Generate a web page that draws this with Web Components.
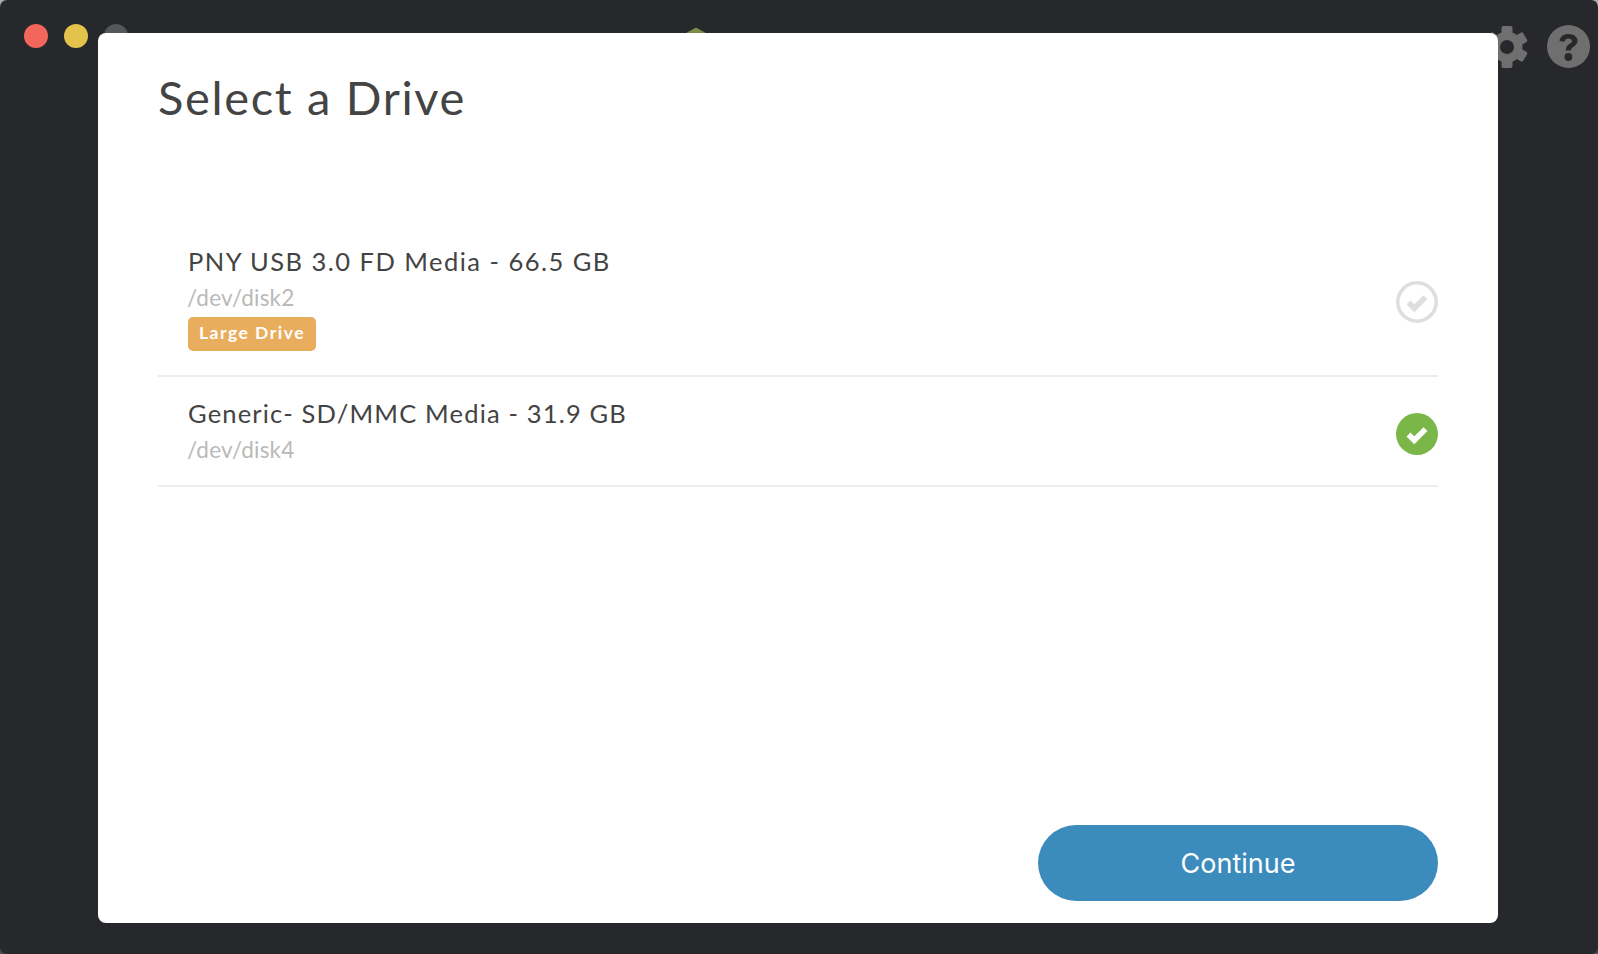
<!DOCTYPE html>
<html>
<head>
<meta charset="utf-8">
<title>Select a Drive</title>
<style>
html, body { margin: 0; height: 100%; overflow: hidden; }
/* the desktop only shows through the window's rounded corners */
html { background: linear-gradient(#a3aab2 0 50%, #4a4b50 50%); }
body { font-family: "Lato", "Liberation Sans", sans-serif; }
</style>
</head>
<body>
<app-window>
  <drive-modal heading="Select a Drive">
    <drive-row style="--name-spacing: 1.47px" name="PNY USB 3.0 FD Media - 66.5 GB" path="/dev/disk2" warning="Large Drive"></drive-row>
    <drive-row style="--name-spacing: 1.17px; --icon-shift: 6px" name="Generic- SD/MMC Media - 31.9 GB" path="/dev/disk4" selected></drive-row>
    <pill-button slot="footer">Continue</pill-button>
  </drive-modal>
</app-window>

<script>
class AppWindow extends HTMLElement {
    constructor() {
        super();
        this.attachShadow({ mode: 'open' });
        this.shadowRoot.innerHTML = `
<style>
:host { display: block; position: relative; width: 1598px; height: 954px; background: #27282c; border-radius: 7px; overflow: hidden; }
header { display: flex; align-items: flex-start; padding: 24px 8px 0 24px; }
.dots { display: flex; gap: 16px; }
.dots i { width: 24px; height: 24px; border-radius: 50%; }
.logo { display: block; margin: 3px 0 0 548px; }
.tools { display: flex; align-items: center; gap: 19px; margin: 1px 0 0 auto; }
.tools svg { display: block; }
::slotted(*) { position: absolute; left: 98px; top: 33px; }
</style>
<header>
  <div class="dots">
    <i style="background:#f2665c"></i>
    <i style="background:#e3c34b"></i>
    <i style="background:#56575a"></i>
  </div>
  <svg class="logo" width="40" height="44" viewBox="0 0 40 44"><path d="M20 1 L38 11 V33 L20 44 L2 33 V11 Z" fill="#7a8c46" stroke="#7a8c46" stroke-width="1" stroke-linejoin="round"/></svg>
  <div class="tools">
    <svg width="42" height="42" viewBox="-21 -21 42 42" fill="#6f6f6f">
      <circle r="15.500"/>
      <rect x="-5.500" y="-21" width="11" height="12" rx="2"/>
      <rect x="-5.500" y="-21" width="11" height="12" rx="2" transform="rotate(60)"/>
      <rect x="-5.500" y="-21" width="11" height="12" rx="2" transform="rotate(120)"/>
      <rect x="-5.500" y="-21" width="11" height="12" rx="2" transform="rotate(180)"/>
      <rect x="-5.500" y="-21" width="11" height="12" rx="2" transform="rotate(240)"/>
      <rect x="-5.500" y="-21" width="11" height="12" rx="2" transform="rotate(300)"/>
      <circle r="7" fill="#27282c"/>
    </svg>
    <svg width="43" height="43" viewBox="0 0 43 43"><circle cx="21.500" cy="21.500" r="21.500" fill="#6f6f6f"/><path d="M12.500 16c.6-4.500 4.300-7 9-7 5.200 0 9 2.800 9 6.800 0 5.700-6.500 5.500-6.500 9.700h-5.200c0-6.700 6.200-6.500 6.200-9.500 0-1.500-1.500-2.500-3.500-2.500-2.100 0-3.500 1-4 3.300z" fill="#27282c"/><circle cx="21.400" cy="32" r="3.900" fill="#27282c"/></svg>
  </div>
</header>
<slot></slot>`;
    }
}
customElements.define('app-window', AppWindow);

class DriveModal extends HTMLElement {
    constructor() {
        super();
        this.attachShadow({ mode: 'open' });
        this.shadowRoot.innerHTML = `
<style>
:host { display: flex; flex-direction: column; box-sizing: border-box; width: 1400px; height: 890px; padding: 0 60px 22px; background: #fff; border-radius: 8px; color: #434343; }
h1 { margin: 0; height: 192px; padding-top: 31px; box-sizing: border-box; font: 400 47px/66px "Lato", "Liberation Sans", sans-serif; letter-spacing: 1.660px; color: #444; }
.list { flex: 1; }
footer { display: flex; justify-content: flex-end; }
</style>
<h1></h1>
<div class="list"><slot></slot></div>
<footer><slot name="footer"></slot></footer>`;
        this.shadowRoot.querySelector('h1').textContent = this.getAttribute('heading');
    }
}
customElements.define('drive-modal', DriveModal);

class DriveRow extends HTMLElement {
    constructor() {
        super();
        this.attachShadow({ mode: 'open' });
        this.shadowRoot.innerHTML = `
<style>
:host { display: flex; align-items: center; justify-content: space-between; padding: 18px 0 18px 30px; border-bottom: 2px solid #ededed; }
.name { font-size: 25.500px; line-height: 36px; margin-bottom: 2px; letter-spacing: var(--name-spacing, 1.3px); color: #434343; }
.path { margin-left: -1px; font-size: 22.500px; line-height: 34px; letter-spacing: .2px; color: #b9b9b9; }
.badge { display: block; width: fit-content; height: 34px; margin: 2px 0 6px; padding: 0 11px; font-size: 17.500px; font-weight: 700; line-height: 32px; letter-spacing: 1.500px; color: #fff; background: #e9ae5d; border-radius: 5px; }
svg { display: block; flex: none; margin-top: var(--icon-shift, 4px); }
</style>
<div>
  <div class="name"></div>
  <div class="path"></div>
  <div class="badge"></div>
</div>
<svg width="42" height="42" viewBox="0 0 42 42"></svg>`;
    }

    connectedCallback() {
        const root = this.shadowRoot;
        root.querySelector('.name').textContent = this.getAttribute('name');
        root.querySelector('.path').textContent = this.getAttribute('path');
        const badge = root.querySelector('.badge');
        if (this.hasAttribute('warning')) badge.textContent = this.getAttribute('warning');
        else badge.remove();

        const check = 'M12.500 21.500l5.800 5.800 11.200-11.200';
        root.querySelector('svg').innerHTML = this.hasAttribute('selected')
            ? `<circle cx="21" cy="21" r="21" fill="#7ab648"/><path d="${check}" fill="none" stroke="#fff" stroke-width="5.500"/>`
            : `<circle cx="21" cy="21" r="19.200" fill="none" stroke="#dedede" stroke-width="3.600"/><path d="${check}" fill="none" stroke="#dedede" stroke-width="5.500"/>`;
    }
}
customElements.define('drive-row', DriveRow);

class PillButton extends HTMLElement {
    constructor() {
        super();
        this.attachShadow({ mode: 'open' });
        this.shadowRoot.innerHTML = `
<style>
:host { display: block; }
button { display: block; width: 400px; height: 76px; padding: 0; border: 0; border-radius: 38px; background: #3c8bbd; color: #fff; font: 400 27px "Inter", "Liberation Sans", sans-serif; cursor: pointer; }
</style>
<button><slot></slot></button>`;
    }
}
customElements.define('pill-button', PillButton);
</script>
</body>
</html>
